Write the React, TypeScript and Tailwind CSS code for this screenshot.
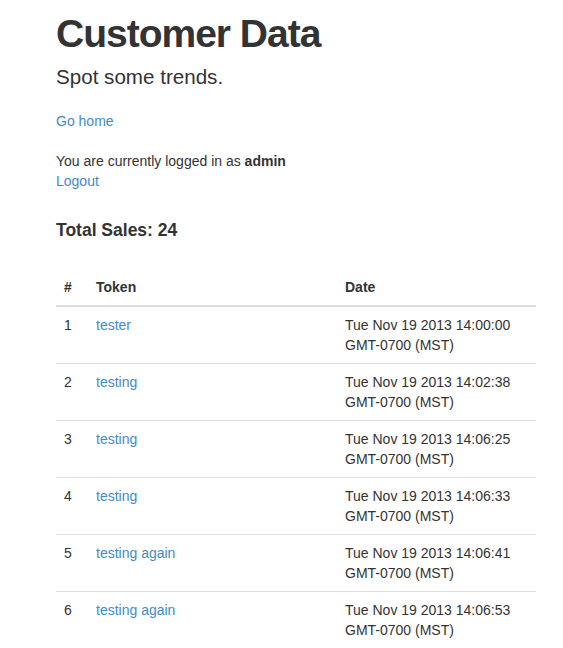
const sales = [
    { id: 1, token: "tester", date: "Tue Nov 19 2013 14:00:00", tz: "GMT-0700 (MST)" },
    { id: 2, token: "testing", date: "Tue Nov 19 2013 14:02:38", tz: "GMT-0700 (MST)" },
    { id: 3, token: "testing", date: "Tue Nov 19 2013 14:06:25", tz: "GMT-0700 (MST)" },
    { id: 4, token: "testing", date: "Tue Nov 19 2013 14:06:33", tz: "GMT-0700 (MST)" },
    { id: 5, token: "testing again", date: "Tue Nov 19 2013 14:06:41", tz: "GMT-0700 (MST)" },
    { id: 6, token: "testing again", date: "Tue Nov 19 2013 14:06:53", tz: "GMT-0700 (MST)" },
]

export default function App() {
    return (
        <div className="min-h-screen bg-white pl-[56px] text-[14px] leading-[20px] text-[#333] [font-family:'Liberation_Sans',Arial,sans-serif]">
            <div className="w-[480px]">
                <h1 className="mt-[12px] text-[39px] leading-[43px] font-bold tracking-[-1px]">Customer Data</h1>
                <p className="mt-[7px] text-[20.6px] leading-[30px]">Spot some trends.</p>

                <p className="mt-[19px]">
                    <a href="#" className="text-[#428bca]">Go home</a>
                </p>

                <p className="mt-[20px]">
                    You are currently logged in as <b>admin</b>
                    <br />
                    <a href="#" className="text-[#428bca]">Logout</a>
                </p>

                <h4 className="mt-[30px] text-[17.5px] leading-[19px] font-bold">Total Sales: 24</h4>

                <table className="mt-[29px] w-[480px] border-collapse text-left">
                    <thead>
                        <tr>
                            <th className="w-[32px] border-b-2 border-[#ddd] p-2 align-bottom font-bold">#</th>
                            <th className="w-[249px] border-b-2 border-[#ddd] p-2 align-bottom font-bold">Token</th>
                            <th className="border-b-2 border-[#ddd] p-2 align-bottom font-bold">Date</th>
                        </tr>
                    </thead>
                    <tbody>
                        {sales.map((s) => (
                            <tr key={s.id}>
                                <td className="border-t border-[#ddd] p-2 align-top">{s.id}</td>
                                <td className="border-t border-[#ddd] p-2 align-top">
                                    <a href="#" className="text-[#428bca]">{s.token}</a>
                                </td>
                                <td className="border-t border-[#ddd] p-2 align-top">
                                    {s.date}
                                    <br />
                                    {s.tz}
                                </td>
                            </tr>
                        ))}
                    </tbody>
                </table>
            </div>
        </div>
    )
}
